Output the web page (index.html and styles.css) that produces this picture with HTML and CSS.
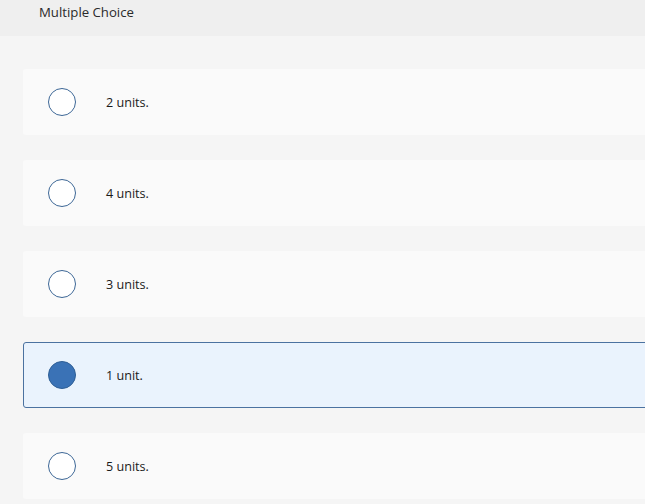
FILE: index.html
```html
<!DOCTYPE html>
<html>
<head>
<meta charset="utf-8">
<link rel="stylesheet" href="styles.css">
</head>
<body>
<header class="header">Multiple Choice</header>
<main class="choices">
  <div class="choice"><span class="radio"></span><span class="label">2 units.</span></div>
  <div class="choice"><span class="radio"></span><span class="label">4 units.</span></div>
  <div class="choice"><span class="radio"></span><span class="label">3 units.</span></div>
  <div class="choice selected"><span class="radio"></span><span class="label">1 unit.</span></div>
  <div class="choice"><span class="radio"></span><span class="label">5 units.</span></div>
</main>
</body>
</html>
```
FILE: styles.css
```css
html, body {
  margin: 0;
  padding: 0;
  background: #f5f5f5;
  overflow: hidden;
  font-family: "Open Sans", "Liberation Sans", sans-serif;
  color: #222;
}
.header {
  height: 36px;
  background: #efefef;
  padding-left: 39px;
  font-size: 13.2px;
  line-height: 25px;
  color: #2a2a2a;
  box-sizing: border-box;
}
.choices {
  display: flex;
  flex-direction: column;
  gap: 25px;
  padding: 33px 0 0 23px;
}
.choice {
  display: flex;
  align-items: center;
  height: 66px;
  margin-right: -20px;
  background: #fafafa;
  border: 1px solid transparent;
  border-radius: 3px;
  box-sizing: border-box;
  padding-left: 24px;
}
.choice.selected {
  background: #eaf3fd;
  border-color: #4b72a0;
}
.radio {
  width: 28px;
  height: 28px;
  border-radius: 50%;
  border: 1.3px solid #3d6796;
  box-sizing: border-box;
  background: #fff;
  flex: none;
}
.selected .radio {
  background: #3a72b6;
  border-color: #2f5f96;
}
.label {
  margin-left: 30px;
  font-size: 12.6px;
  color: #1a1a1a;
}
```
